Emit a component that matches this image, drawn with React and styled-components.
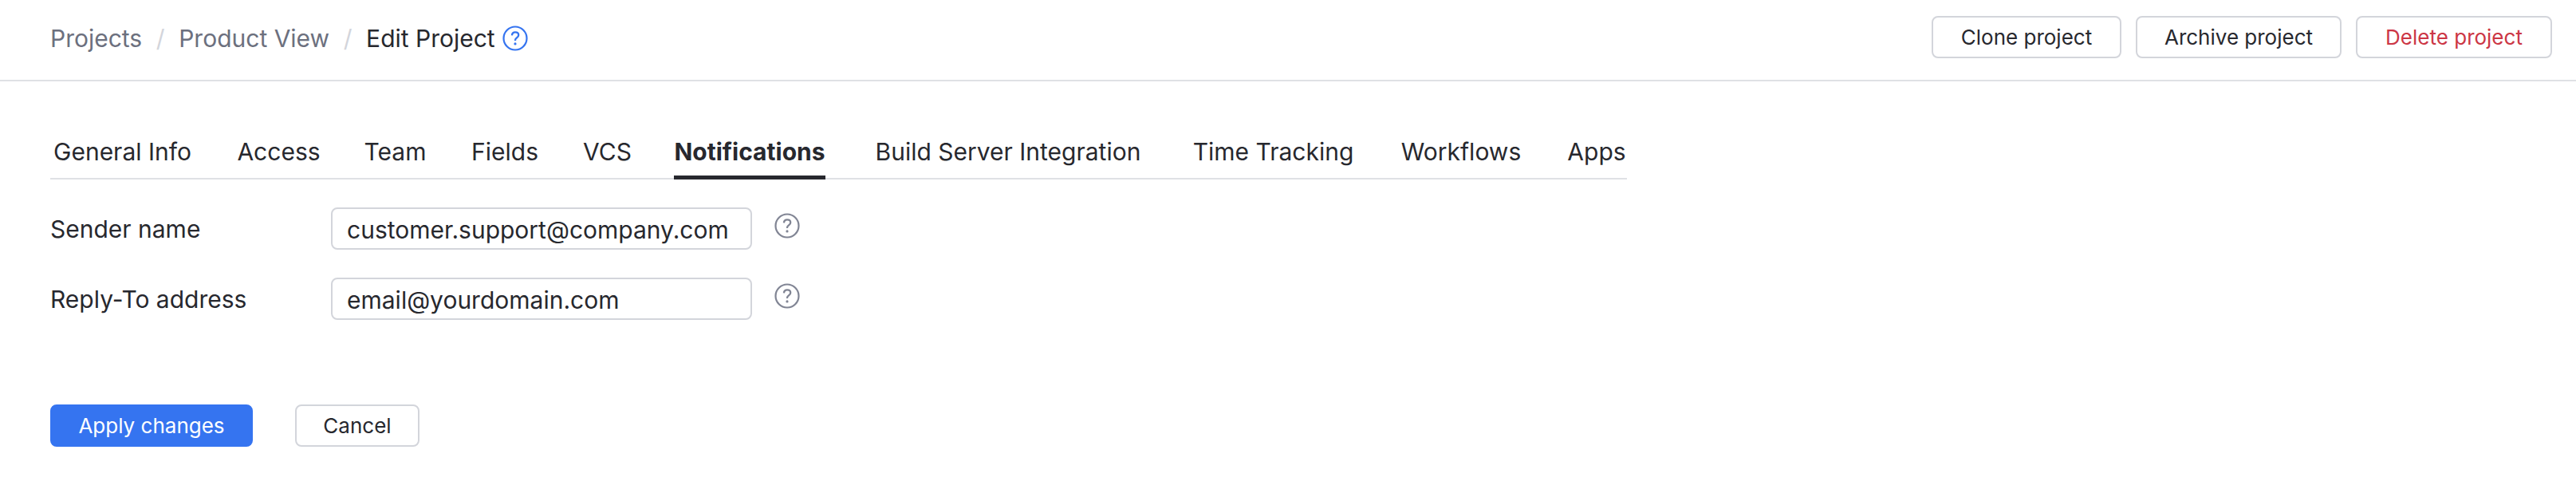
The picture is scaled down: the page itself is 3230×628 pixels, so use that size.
import styled, { createGlobalStyle } from 'styled-components'

const tabs = [
  { label: 'General Info', width: 181 },
  { label: 'Access', width: 107 },
  { label: 'Team', width: 81 },
  { label: 'Fields', width: 90 },
  { label: 'VCS', width: 63 },
  { label: 'Notifications', width: 190, active: true },
  { label: 'Build Server Integration', width: 354 },
  { label: 'Time Tracking', width: 207 },
  { label: 'Workflows', width: 160 },
  { label: 'Apps', width: 76 },
]

const fields = [
  { id: 'sender', label: 'Sender name', value: 'customer.support@company.com' },
  { id: 'reply', label: 'Reply-To address', value: 'email@yourdomain.com' },
]

function HelpIcon({ color }) {
  return (
    <StyledHelp viewBox="0 0 32 32" fill="none" stroke={color}>
      <circle cx="16" cy="16" r="14.5" strokeWidth="2.2" />
      <path d="M11.9 12.4c.2-2.5 1.8-4 4.2-4 2.4 0 4.1 1.4 4.1 3.5 0 1.6-.8 2.5-2.1 3.4-1.4.9-2.1 1.7-2.1 3.2v.5" strokeWidth="2.3" />
      <circle cx="16" cy="22.9" r="1.6" fill={color} stroke="none" />
    </StyledHelp>
  )
}

function App() {
  return (
    <>
      <GlobalStyle />
      <StyledHeader>
        <StyledBreadcrumbs>
          <StyledCrumb href="#">Projects</StyledCrumb>
          <StyledSlash>/</StyledSlash>
          <StyledCrumb href="#">Product View</StyledCrumb>
          <StyledSlash>/</StyledSlash>
          <StyledCurrent>Edit Project</StyledCurrent>
          <HelpIcon color="#3574f0" />
        </StyledBreadcrumbs>

        <StyledActions>
          <StyledButton $width={238}>Clone project</StyledButton>
          <StyledButton $width={258}>Archive project</StyledButton>
          <StyledButton $width={246} $danger>Delete project</StyledButton>
        </StyledActions>
      </StyledHeader>

      <StyledMain>
        <StyledTabs>
          {tabs.map((tab) => (
            <StyledTab key={tab.label} href="#" $width={tab.width} $active={tab.active}>
              {tab.label}
            </StyledTab>
          ))}
        </StyledTabs>

        <StyledForm>
          {fields.map((field) => (
            <StyledRow key={field.id}>
              <StyledLabel htmlFor={field.id}>{field.label}</StyledLabel>
              <StyledInput id={field.id} defaultValue={field.value} />
              <HelpIcon color="#818594" />
            </StyledRow>
          ))}
        </StyledForm>

        <StyledFooter>
          <StyledButton $width={254} $primary>Apply changes</StyledButton>
          <StyledButton $width={156}>Cancel</StyledButton>
        </StyledFooter>
      </StyledMain>
    </>
  )
}

export default App

const GlobalStyle = createGlobalStyle`
  * {
    box-sizing: border-box;
  }

  body {
    margin: 0;
    background: #fff;
    color: #27282e;
    font-family: Inter, "Liberation Sans", sans-serif;
    font-size: 30px;
    line-height: 40px;
  }
`

const StyledHelp = styled.svg`
  flex: none;
  width: 32px;
  height: 32px;
`

const StyledHeader = styled.header`
  display: flex;
  justify-content: space-between;
  height: 102px;
  padding: 20px 30px 0 63px;
  border-bottom: 2px solid #dfe1e5;
`

const StyledBreadcrumbs = styled.nav`
  display: flex;
  align-items: center;
  height: 56px;

  ${StyledHelp} {
    margin-left: 9px;
  }
`

const StyledCrumb = styled.a`
  color: #6c707e;
  text-decoration: none;
`

const StyledCurrent = styled.span`
  color: #27282e;
`

const StyledSlash = styled.span`
  width: 46px;
  color: #d3d5db;
  text-align: center;
`

const StyledActions = styled.div`
  display: flex;
  gap: 18px;
`

const StyledButton = styled.button`
  width: ${({ $width }) => $width}px;
  height: 53px;
  padding: 0;
  border: 2px solid ${({ $primary }) => ($primary ? '#3574f0' : '#d3d5db')};
  border-radius: 8px;
  background: ${({ $primary }) => ($primary ? '#3574f0' : '#fff')};
  color: ${({ $primary, $danger }) => ($primary ? '#fff' : $danger ? '#cc3645' : '#27282e')};
  font: 400 26px/40px Inter, "Liberation Sans", sans-serif;
`

const StyledMain = styled.main`
  padding: 68px 63px 0;
`

const StyledTabs = styled.div`
  display: flex;
  gap: 52px;
  width: 1977px;
  height: 55px;
  border-bottom: 2px solid #dfe1e5;
`

const StyledTab = styled.a`
  flex: none;
  width: ${({ $width }) => $width}px;
  height: 55px;
  border-bottom: ${({ $active }) => ($active ? '5px solid #27282e' : 'none')};
  color: #27282e;
  font-weight: ${({ $active }) => ($active ? 700 : 400)};
  text-align: center;
  text-decoration: none;
  white-space: nowrap;
`

const StyledForm = styled.form`
  display: flex;
  flex-direction: column;
  gap: 35px;
  padding-top: 35px;
`

const StyledRow = styled.div`
  display: flex;
  height: 53px;

  ${StyledHelp} {
    margin: 7px 0 0 28px;
  }
`

const StyledLabel = styled.label`
  width: 352px;
  padding-top: 7px;
`

const StyledInput = styled.input`
  width: 528px;
  height: 53px;
  padding: 3px 18px 0;
  border: 2px solid #d3d5db;
  border-radius: 8px;
  outline: none;
  background: #fff;
  color: #27282e;
  font: inherit;
`

const StyledFooter = styled.footer`
  display: flex;
  gap: 53px;
  margin-top: 106px;
`
